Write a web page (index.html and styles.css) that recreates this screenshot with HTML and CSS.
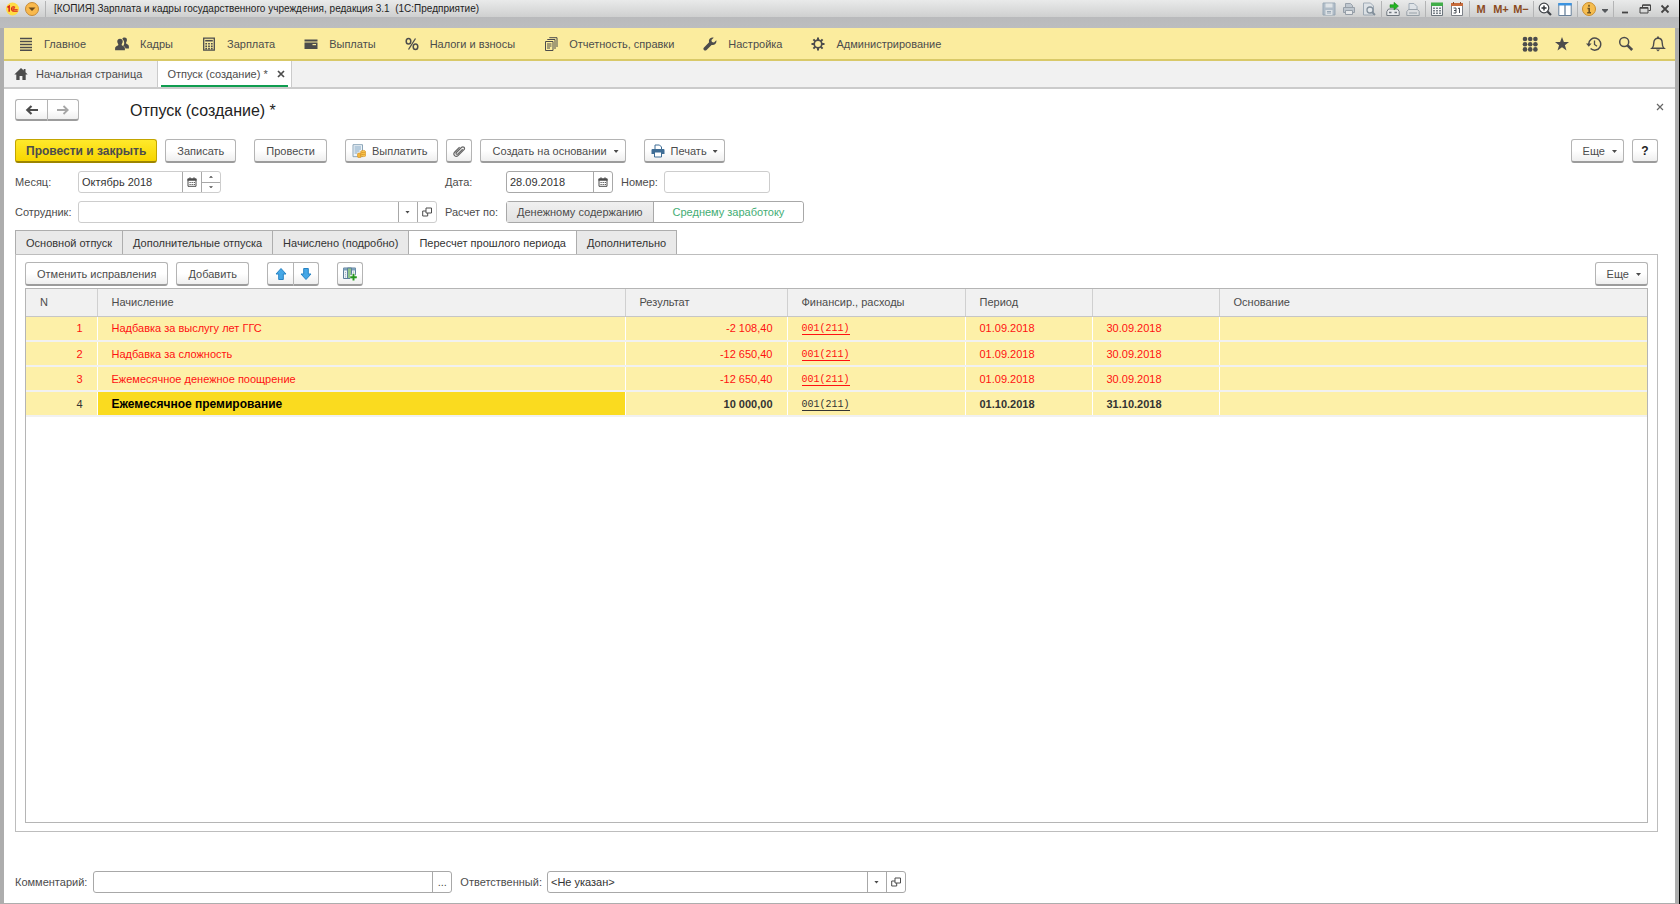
FILE: index.html
```html
<!DOCTYPE html>
<html lang="ru">

<head>
  <meta charset="UTF-8">
  <meta name="viewport" content="width=device-width, initial-scale=1.0">
  <title>Отпуск (создание) *</title>
  <link rel="stylesheet" href="styles.css">
</head>

<body>
  <div class="window">
    <!-- Заголовок окна -->
    <header class="titlebar">
      <svg class="logo" viewBox="0 0 14 14" aria-hidden="true">
        <circle cx="7" cy="7" r="7" fill="#ffdc45"/>
        <path d="M1.5 5.2 3.4 4v6" fill="none" stroke="#d8211c" stroke-width="1.6"/>
        <path d="M9.8 5.2a2.4 2.4 0 1 0-1.6 4.2h4.4M9.2 6.5a1 1 0 1 0-.6 1.4h4" fill="none" stroke="#d8211c" stroke-width="1.1"/>
      </svg>
      <button class="main-menu" aria-label="Главное меню">
        <svg viewBox="0 0 14 14"><circle cx="7" cy="7" r="6.5" fill="#f9b94c" stroke="#c58a35"/><path d="M3.5 5.5h7L7 9z" fill="#6b4a1c"/></svg>
      </button>
      <span class="tb-line"></span>
      <span class="window-title">[КОПИЯ] Зарплата и кадры государственного учреждения, редакция 3.1&nbsp; (1С:Предприятие)</span>
      <div class="tb-tools">
        <button class="tb-btn dim" aria-label="Сохранить"><svg viewBox="0 0 14 14"><path d="M1 1h12v12H1z" fill="#9fb0c0" stroke="#7f93a6"/><path d="M3.5 1.5h7v4h-7zM3.5 8h7v5h-7z" fill="#dfe5ea"/><path d="M5 9.5h4M5 11h4" stroke="#7f93a6"/></svg></button>
        <button class="tb-btn dim" aria-label="Печать"><svg viewBox="0 0 14 14"><path d="M3.5 5V1.5h5l2 2V5M1.5 5.5h11v5h-11z" fill="#b3bec9" stroke="#7b8794"/><path d="M3.5 8.5h7v4h-7z" fill="#eef0f2" stroke="#7b8794"/></svg></button>
        <button class="tb-btn dim" aria-label="Просмотр"><svg viewBox="0 0 14 14"><path d="M1.5 1h7l3 3v9h-10z" fill="#dde4ea" stroke="#8696a5"/><circle cx="8" cy="8" r="3" fill="#e8eef3" stroke="#607282" stroke-width="1.3"/><path d="m10 10 3 3" stroke="#607282" stroke-width="1.8"/></svg></button>
        <span class="tb-line"></span>
        <button class="tb-btn" aria-label="Получить ссылку"><svg viewBox="0 0 14 14"><path d="M.8 9.5 2.5 7h9l1.7 2.5v4H.8z" fill="#e8eaec" stroke="#707880"/><path d="M3 10.5h2.5M8.5 10.5H11" stroke="#707880" stroke-width="1.4"/><path d="M4 2.7h4V.3l4.500 3.800L8 8V5.500H4z" fill="#22b422" stroke="#128012" stroke-width=".5"/></svg></button>
        <button class="tb-btn dim" aria-label="Перейти по ссылке"><svg viewBox="0 0 14 14"><path d="M3 8V1.5h5l3 3V8" fill="#dfe5ea" stroke="#8595a4"/><path d="M.8 9.5 2.5 7.5h9l1.7 2v4H.8z" fill="#dde0e3" stroke="#7f8b96"/><path d="M3 11h8" stroke="#7f8b96"/></svg></button>
        <span class="tb-line"></span>
        <button class="tb-btn" aria-label="Калькулятор"><svg viewBox="0 0 14 14"><path d="M1.5 1.5h11v12h-11z" fill="#f4f5f6" stroke="#6c757d"/><path d="M1 .5h12v3.5H1z" fill="#41ad49"/><path d="M4 5.5v7M7 5.5v7M10 5.5v7" stroke="#5d6770" stroke-width="1.6" stroke-dasharray="1.4 1.1"/></svg></button>
        <button class="tb-btn" aria-label="Календарь"><svg viewBox="0 0 14 14"><path d="M1.5 1.5h11v12h-11z" fill="#fff" stroke="#7d8188"/><path d="M1 1h12v3H1z" fill="#c86b3b"/><path d="M3.5 0v2M10.5 0v2" stroke="#8a4a28"/><path d="M3.500 6h2.500v5h-2.500M4 8.500h2M8 6.500 9.500 6v5" fill="none" stroke="#474c55"/></svg></button>
        <span class="tb-line"></span>
        <button class="tb-btn mem">M</button>
        <button class="tb-btn mem">M+</button>
        <button class="tb-btn mem">M−</button>
        <span class="tb-line"></span>
        <button class="tb-btn" aria-label="Масштаб"><svg viewBox="0 0 14 14"><circle cx="6" cy="6" r="4.800" fill="#fff" stroke="#3f4348" stroke-width="1.200"/><path d="M3.500 6h5M6 3.500v5" stroke="#2d3136" stroke-width="1.400"/><path d="m9.500 9.500 3.500 3.500" stroke="#3f4348" stroke-width="2.200"/></svg></button>
        <button class="tb-btn" aria-label="Панели"><svg viewBox="0 0 14 14"><path d="M.8 1.500h12.400v12H.8z" fill="#fff" stroke="#68809a"/><path d="M.3 1h13.400v2.500H.3z" fill="#3b93e0"/><path d="M7 3v10" stroke="#68809a" stroke-width="1.300"/></svg></button>
        <span class="tb-line"></span>
        <button class="tb-btn" aria-label="О программе"><svg viewBox="0 0 14 14"><circle cx="7" cy="7" r="6.500" fill="#f5bd50" stroke="#c98d2d"/><path d="M7 2.800v2M5.500 6.500H7.200v4M5.200 10.700h3.800" fill="none" stroke="#6e5424" stroke-width="1.600"/></svg></button>
        <button class="tb-btn narrow" aria-label="Ещё"><svg class="small" viewBox="0 0 8 8"><path d="M1 4h6v1L4 8 1 5z" fill="#55585c"/></svg></button>
        <span class="tb-line"></span>
        <button class="tb-btn" aria-label="Свернуть"><svg viewBox="0 0 14 14"><path d="M4 10.500h6" stroke="#444" stroke-width="1.800"/></svg></button>
        <button class="tb-btn" aria-label="Восстановить"><svg viewBox="0 0 14 14"><path d="M4.500 5V3h8v5.500h-2M2 5.500h8v5.500H2z" fill="none" stroke="#444"/><path d="M2 6h8M4.500 3.200h8" stroke="#444" stroke-width="1.300"/></svg></button>
        <button class="tb-btn" aria-label="Закрыть"><svg viewBox="0 0 14 14"><path d="m3.500 3.500 7 7m0-7-7 7" stroke="#444" stroke-width="1.800"/></svg></button>
      </div>
    </header>

    <!-- Панель разделов -->
    <nav class="sections">
      <a href="#" class="section"><svg viewBox="0 0 14 14"><path d="M1 1.500h12M1 4.500h12M1 7.500h12M1 10.500h12M1 13.300h12" stroke="#4c4c4c" stroke-width="1.500"/></svg>Главное</a>
      <a href="#" class="section"><svg viewBox="0 0 14 14" fill="#4c4c4c"><path d="M9.500.5c1.800 0 2.700 1.300 2.400 3-.2 1.200-.9 1.700-.9 2.500 0 1 2.900 1.200 2.900 3.500V11.500H10.500c-.2-1.500-1.300-2.200-2.300-2.700 1-1.300 1.200-2.700.8-4.400C8.300 2.500 7.300 2 7.300 1.700 7.700 1 8.500.5 9.500.5z"/><path d="M5 1.800c2 0 3 1.400 2.700 3.300-.2 1.300-1 1.900-1 2.600 0 1.200 3.200 1.100 3.200 3.600v2H.1v-2c0-2.500 3.200-2.400 3.200-3.600 0-.7-.8-1.300-1-2.600C2 3.200 3 1.800 5 1.800z"/></svg>Кадры</a>
      <a href="#" class="section"><svg viewBox="0 0 14 14"><path d="M1.700 1.200h10.600v12H1.700z" fill="none" stroke="#4c4c4c" stroke-width="1.300"/><path d="M3.200 3.700h7.600" stroke="#4c4c4c" stroke-width="1.600"/><path d="M4.200 6v6.500M7 6v6.500M9.800 6v6.500" stroke="#4c4c4c" stroke-width="1.700" stroke-dasharray="1.600 .8"/></svg>Зарплата</a>
      <a href="#" class="section"><svg viewBox="0 0 14 14" fill="#4c4c4c"><path d="M.5 2.500h13v2H.5zM.5 5.500h13v6.500H.5z"/><path d="M8.500 7h3.500v1.200H8.500z" fill="#fbec9e"/></svg>Выплаты</a>
      <a href="#" class="section"><svg viewBox="0 0 14 14" fill="none" stroke="#4c4c4c"><ellipse cx="3.500" cy="4.300" rx="2.300" ry="2.800" stroke-width="1.500"/><ellipse cx="10.500" cy="9.700" rx="2.300" ry="2.800" stroke-width="1.500"/><path d="m10.500 1.500-7 11" stroke-width="1.300"/></svg>Налоги и взносы</a>
      <a href="#" class="section"><svg viewBox="0 0 14 14" fill="none" stroke="#4c4c4c"><path d="M1.500 4.500h7.500v9H1.500zM3.500 3V2.500h7.500V12M5.500 1V.7H13V10"/><path d="M3 7h4.500M3 9h4.500M3 11h3"/></svg>Отчетность, справки</a>
      <a href="#" class="section"><svg viewBox="0 0 14 14"><path d="M13.300 3.300 11 5.500 8.900 5l-.5-2L10.700.7C8.800 0 6.500 1 6 3.300c-.2.800 0 1.500.1 2L.8 10.700c-1.300 1.500.9 3.800 2.500 2.500l5.300-5.300c2.700.8 5.500-1.700 4.700-4.600z" fill="#4c4c4c"/></svg>Настройка</a>
      <a href="#" class="section"><svg viewBox="0 0 14 14" fill="none" stroke="#4c4c4c"><circle cx="7" cy="7" r="3.800" stroke-width="1.700"/><path d="M7 .5v2.500M7 11v2.500M.5 7H3M11 7h2.500M2.400 2.400l1.800 1.800M9.800 9.800l1.800 1.800M2.400 11.600l1.800-1.800M9.800 4.200l1.800-1.800" stroke-width="2"/></svg>Администрирование</a>
      <div class="section-tools">
        <button aria-label="Все функции"><svg viewBox="0 0 16 16" fill="#4c4c4c"><circle cx="3" cy="3" r="2.300"/><circle cx="8.200" cy="3" r="2.300"/><circle cx="13.400" cy="3" r="2.300"/><circle cx="3" cy="8.200" r="2.300"/><circle cx="8.200" cy="8.200" r="2.300"/><circle cx="13.400" cy="8.200" r="2.300"/><circle cx="3" cy="13.400" r="2.300"/><circle cx="8.200" cy="13.400" r="2.300"/><circle cx="13.400" cy="13.400" r="2.300"/></svg></button>
        <button aria-label="Избранное"><svg viewBox="0 0 16 16"><path d="m8 1 1.900 5h5.100l-4.100 3.200 1.600 5.300L8 11.300l-4.500 3.200 1.600-5.300L1 6h5.100z" fill="#4c4c4c"/></svg></button>
        <button aria-label="История"><svg viewBox="0 0 16 16" fill="none" stroke="#4c4c4c"><path d="M2.700 8a6 6 0 1 1 1.900 4.500" stroke-width="1.500"/><path d="M0 7.500h5.600L2.800 10.800z" fill="#4c4c4c" stroke="none"/><path d="M8.500 4.500V8.500l2.500 1.800" stroke-width="1.300"/></svg></button>
        <button aria-label="Поиск"><svg viewBox="0 0 16 16" fill="none" stroke="#4c4c4c"><circle cx="6.200" cy="6" r="4.500" stroke-width="1.500"/><path d="m9.500 9.300 4.700 4.700" stroke-width="2.600"/></svg></button>
        <button aria-label="Уведомления"><svg viewBox="0 0 16 16" fill="none" stroke="#4c4c4c"><path d="M2 12.300c1.800-1.500 1.800-3 1.800-5.500C3.800 4 5.500 2.300 8 2.300s4.200 1.700 4.200 4.500c0 2.500 0 4 1.800 5.500z" stroke-width="1.400"/><path d="M8 .5v2" stroke-width="1.800"/><path d="M6 13.500h4L8 15.500z" fill="#4c4c4c" stroke="none"/></svg></button>
      </div>
    </nav>

    <!-- Открытые окна -->
    <nav class="open-pages">
      <a href="#" class="page-link"><svg viewBox="0 0 14 14"><path d="M7 1 .3 7.500h2V13h3.300V9h2.800v4h3.300V7.500h2L11.500 5.300V2H9.700v1.600z" fill="#4c4c4c"/></svg>Начальная страница</a>
      <div class="page-link current">
        <span>Отпуск (создание) *</span>
        <button aria-label="Закрыть вкладку"><svg viewBox="0 0 8 8"><path d="m1 1 6 6m0-6L1 7" stroke="#4c4c4c" stroke-width="1.700"/></svg></button>
      </div>
    </nav>

    <main class="form">
      <div class="form-head">
        <div class="btn-pair">
          <button class="btn" aria-label="Назад"><svg viewBox="0 0 14 14"><path d="M13 7H3M6.500 3 2.300 7l4.200 4" fill="none" stroke="#4c4c4c" stroke-width="2.200"/></svg></button>
          <button class="btn" aria-label="Вперед"><svg viewBox="0 0 14 14"><path d="M1 7h10M7.500 3l4.200 4-4.200 4" fill="none" stroke="#a6a6a6" stroke-width="1.800"/></svg></button>
        </div>
        <h1>Отпуск (создание) *</h1>
        <button class="close-form" aria-label="Закрыть"><svg viewBox="0 0 8 8"><path d="m1 1 6 6m0-6L1 7" stroke="#666" stroke-width="1.200"/></svg></button>
      </div>

      <div class="commands">
        <button class="btn primary">Провести и закрыть</button>
        <button class="btn">Записать</button>
        <button class="btn apart">Провести</button>
        <button class="btn apart with-icon"><svg viewBox="0 0 14 14"><path d="M1 .7h9.500v12H1z" fill="#eef4f8" stroke="#8aa4b8"/><path d="M2.500 3h6.500M2.500 5h6.500M2.500 7h5M2.500 9h3" stroke="#7fa3c2"/><path d="M5.500 10c0-1.400 3.500-1.400 3.500 0v3.200c-1 .6-3.500.5-3.500-.5z" fill="#f3b63c" stroke="#d58e21" stroke-width=".6"/><path d="M8.700 7.500c0-1.500 5-1.500 5 0V12c-1 .9-4 .7-5 0z" fill="#f7c44f" stroke="#d58e21" stroke-width=".6"/><path d="M9 8c1 .8 3.500.8 4.500 0M9 10c1 .8 3.500.8 4.500 0" fill="none" stroke="#d58e21" stroke-width=".7"/></svg>Выплатить</button>
        <button class="btn icon" aria-label="Присоединенные файлы"><svg viewBox="0 0 14 14"><path d="M10.700 5.200 6 9.900c-1.200 1.200-2.700-.2-1.600-1.400l5-5c1.900-1.800 4.200.4 2.400 2.400l-5.500 5.500c-2.700 2.500-6-.7-3.500-3.400L7.600 3.200" fill="none" stroke="#666" stroke-width="1.200"/></svg></button>
        <button class="btn more">Создать на основании<i class="caret"></i></button>
        <button class="btn more apart with-icon"><svg viewBox="0 0 14 14"><path d="M4 5V1h4.500L10.500 3v2" fill="#fff" stroke="#3f6d95"/><path d="M1.500 5h11a1 1 0 0 1 1 1v4h-13V6a1 1 0 0 1 1-1z" fill="#3f6d95"/><path d="M3.500 8h7v5h-7z" fill="#fff" stroke="#3f6d95"/></svg>Печать<i class="caret"></i></button>
        <button class="btn more to-right">Еще<i class="caret"></i></button>
        <button class="btn icon help">?</button>
      </div>

      <div class="fields">
        <label for="month">Месяц:</label>
        <div class="first">
          <div class="field month">
            <input id="month" type="text" value="Октябрь 2018">
            <button aria-label="Выбрать месяц"><svg class="cal" viewBox="0 0 10 10"><path d="M1 2h8v7.300H1z" fill="none" stroke="#4c4c4c"/><path d="M.5 1.500h9v2.200h-9zM2.500.3h1v2h-1zM6.500.3h1v2h-1z" fill="#4c4c4c"/><path d="M2.500 5.500h5.500M2.500 7.500h5.500" stroke="#4c4c4c" stroke-dasharray="1.200 .9"/></svg></button>
            <div class="spin">
              <button aria-label="Больше"><i class="up"></i></button>
              <button aria-label="Меньше"><i class="down"></i></button>
            </div>
          </div>
        </div>
        <label for="date">Дата:</label>
        <div class="line">
          <div class="field date">
            <input id="date" type="text" value="28.09.2018">
            <button aria-label="Выбрать дату"><svg class="cal" viewBox="0 0 10 10"><path d="M1 2h8v7.300H1z" fill="none" stroke="#4c4c4c"/><path d="M.5 1.500h9v2.200h-9zM2.500.3h1v2h-1zM6.500.3h1v2h-1z" fill="#4c4c4c"/><path d="M2.500 5.500h5.500M2.500 7.500h5.500" stroke="#4c4c4c" stroke-dasharray="1.200 .9"/></svg></button>
          </div>
          <label for="number" class="number-label">Номер:</label>
          <div class="field number"><input id="number" type="text"></div>
        </div>

        <label for="employee">Сотрудник:</label>
        <div class="first">
          <div class="field employee">
            <div class="select">
              <select id="employee"><option></option></select>
              <i class="caret"></i>
            </div>
            <button aria-label="Открыть"><svg class="cal" viewBox="0 0 10 10"><path d="M4 1h5.500v5H4zM4 4H.7v5h5V6" fill="none" stroke="#4c4c4c"/></svg></button>
          </div>
        </div>
        <span>Расчет по:</span>
        <div class="line">
          <div class="switch">
            <label><input type="radio" name="calc">Денежному содержанию</label>
            <label><input type="radio" name="calc" checked>Среднему заработоку</label>
          </div>
        </div>
      </div>

      <div class="tabs">
        <button class="tab">Основной отпуск</button>
        <button class="tab">Дополнительные отпуска</button>
        <button class="tab">Начислено (подробно)</button>
        <button class="tab active">Пересчет прошлого периода</button>
        <button class="tab">Дополнительно</button>
      </div>

      <section class="panel">
        <div class="commands">
          <button class="btn">Отменить исправления</button>
          <button class="btn">Добавить</button>
          <div class="btn-pair apart">
            <button class="btn" aria-label="Вверх"><svg viewBox="0 0 14 14"><path d="M7 1.500 12 7H9.300v5.500H4.700V7H2z" fill="#45a7e6" stroke="#2683c4"/></svg></button>
            <button class="btn" aria-label="Вниз"><svg viewBox="0 0 14 14"><path d="M7 12.500 12 7H9.300V1.500H4.700V7H2z" fill="#45a7e6" stroke="#2683c4"/></svg></button>
          </div>
          <button class="btn icon apart" aria-label="Настройка колонок"><svg viewBox="0 0 14 14"><path d="M.5 1h12v10.500H.5z" fill="#eef2f5" stroke="#5d7f9b"/><path d="M.5 1h12v2.500H.5z" fill="#7da0bb"/><path d="M4.500 1h4v10.500h-4z" fill="#8fc58b" stroke="#5d7f9b"/><path d="M2.500 5v5.500M10.500 4.500v3" stroke="#9db4c6" stroke-dasharray="1.200 1"/><path d="M10.500 6.500v7M7 10h7" stroke="#fff" stroke-width="3.400"/><path d="M10.500 6.800v6.800M7.200 10.200h6.600" stroke="#27961f" stroke-width="2"/></svg></button>
          <button class="btn more to-right">Еще<i class="caret"></i></button>
        </div>

        <div class="table-box">
          <table>
            <colgroup>
              <col class="c-n"><col class="c-name"><col class="c-sum"><col class="c-fin"><col class="c-date"><col class="c-date"><col>
            </colgroup>
            <thead>
              <tr><th>N</th><th>Начисление</th><th>Результат</th><th>Финансир., расходы</th><th>Период</th><th></th><th>Основание</th></tr>
            </thead>
            <tbody>
              <tr class="storno"><td class="num">1</td><td>Надбавка за выслугу лет ГГС</td><td class="num">-2 108,40</td><td><a href="#">001(211)</a></td><td>01.09.2018</td><td>30.09.2018</td><td></td></tr>
              <tr class="storno"><td class="num">2</td><td>Надбавка за сложность</td><td class="num">-12 650,40</td><td><a href="#">001(211)</a></td><td>01.09.2018</td><td>30.09.2018</td><td></td></tr>
              <tr class="storno"><td class="num">3</td><td>Ежемесячное денежное поощрение</td><td class="num">-12 650,40</td><td><a href="#">001(211)</a></td><td>01.09.2018</td><td>30.09.2018</td><td></td></tr>
              <tr class="manual"><td class="num">4</td><td class="cursor">Ежемесячное премирование</td><td class="num">10 000,00</td><td><a href="#">001(211)</a></td><td>01.10.2018</td><td>31.10.2018</td><td></td></tr>
            </tbody>
          </table>
        </div>
      </section>

      <footer class="form-foot">
        <label for="comment">Комментарий:</label>
        <div class="field strong comment">
          <input id="comment" type="text">
          <button aria-label="Выбрать комментарий">...</button>
        </div>
        <label for="responsible" class="resp-label">Ответственный:</label>
        <div class="field strong responsible">
          <div class="select">
            <select id="responsible"><option>&lt;Не указан&gt;</option></select>
            <i class="caret"></i>
          </div>
          <button aria-label="Открыть"><svg class="cal" viewBox="0 0 10 10"><path d="M4 1h5.500v5H4zM4 4H.7v5h5V6" fill="none" stroke="#4c4c4c"/></svg></button>
        </div>
      </footer>
    </main>
  </div>
</body>

</html>
```

FILE: styles.css
```css
* {
  box-sizing: border-box;
}

body {
  margin: 0;
  background-color: #000;
  color: #4c4c4c;
  font-family: "Liberation Sans", Arial, sans-serif;
  font-size: 11px;
  line-height: 16px;
}

button,
input,
select {
  margin: 0;
  padding: 0;
  border: none;
  background: none;
  color: inherit;
  font: inherit;
}

a {
  color: inherit;
  text-decoration: none;
}

svg {
  display: block;
  flex: none;
  width: 14px;
  height: 14px;
}

.window {
  display: flex;
  flex-direction: column;
  min-height: 100vh;
  margin-right: 1px;
  padding: 0 4px 1px;
  background-color: #adadad;
}

/* заголовок */
.titlebar {
  display: flex;
  align-items: flex-start;
  height: 28px;
  margin: 0 -4px;
  padding: 1px 4px 0 6px;
  background: linear-gradient(#e9eaea, #cfd0d0 17px, #b9babc 17px, #bcbdbf);
}

.logo {
  width: 13px;
  height: 16px;
}

.main-menu {
  margin-left: 6px;
  padding-top: 1px;
}

.titlebar > .tb-line {
  margin-left: 6px;
}

.tb-line {
  width: 1px;
  height: 16px;
  margin: 0 1px 0 2px;
  background-color: #b3b4b5;
}

.window-title {
  margin-left: 7px;
  color: #222;
  font-size: 10px;
  white-space: nowrap;
}

.tb-tools {
  display: flex;
  margin-left: auto;
}

.tb-btn {
  display: flex;
  align-items: center;
  justify-content: center;
  width: 20px;
  height: 16px;
}

.tb-btn.narrow {
  width: 12px;
}

.tb-btn.dim svg {
  opacity: 0.7;
}

.tb-btn.mem {
  color: #8a4b22;
  font-weight: bold;
}

svg.small {
  width: 8px;
  height: 8px;
}

/* разделы */
.sections {
  display: flex;
  align-items: center;
  gap: 29px;
  height: 33px;
  padding-left: 15px;
  border-bottom: 2px solid #d9c968;
  background-color: #fbec9e;
}

.section {
  display: flex;
  align-items: center;
  gap: 11px;
  white-space: nowrap;
}

.section-tools {
  display: flex;
  margin-right: 1px;
  margin-left: auto;
}

.section-tools button {
  display: flex;
  justify-content: center;
  width: 32px;
}

.section-tools svg {
  width: 16px;
  height: 16px;
}

/* вкладки окон */
.open-pages {
  display: flex;
  height: 28px;
  border-bottom: 2px solid #cbcbcb;
  background-color: #f1f1f1;
}

.page-link {
  display: flex;
  align-items: center;
  gap: 8px;
  padding: 0 15px 0 10px;
}

.page-link.current {
  gap: 9px;
  padding: 0 6px 0 9px;
  border: solid #cbcbcb;
  border-width: 0 1px;
  background: linear-gradient(#0f9d50, #0f9d50) center bottom / calc(100% - 6px) 2px no-repeat #fff;
}

.page-link.current svg {
  width: 8px;
  height: 8px;
}

/* форма */
.form {
  display: flex;
  flex: 1;
  flex-direction: column;
  padding: 10px 17px 10px 11px;
  background-color: #fff;
}

.form-head {
  display: flex;
  align-items: center;
  height: 22px;
}

.form-head .btn {
  height: 22px;
}

h1 {
  margin: 2px 0 0 51px;
  color: #222;
  font-size: 16px;
  font-weight: normal;
  line-height: 20px;
}

.close-form {
  align-self: flex-start;
  margin-right: -6px;
  margin-left: auto;
  padding: 4px 0 4px 4px;
}

.close-form svg {
  width: 8px;
  height: 8px;
}

.commands {
  display: flex;
  gap: 8px;
}

.form-head + .commands {
  margin: 18px 0 8px;
}

.btn {
  display: flex;
  align-items: center;
  justify-content: center;
  height: 24px;
  padding: 0 11px;
  border: 1px solid #b4b4b4;
  border-bottom: 2px solid #9c9c9c;
  border-radius: 3px;
  background: linear-gradient(#fff 50%, #efefef);
  white-space: nowrap;
}

.btn.primary {
  padding: 0 10px;
  border-color: #c3a500;
  border-bottom-color: #9d8500;
  background: linear-gradient(#ffe92b, #f7d500);
  font-size: 12px;
  font-weight: bold;
}

.btn.icon {
  width: 26px;
  padding: 0;
}

.btn.with-icon {
  gap: 6px;
  padding: 0 10px 0 6px;
}

.btn.more {
  padding-right: 6px;
}

.btn.help {
  color: #222;
  font-size: 12px;
  font-weight: bold;
}

.apart {
  margin-left: 10px;
}

.to-right {
  margin-left: auto;
}

.caret {
  width: 5px;
  height: 3px;
  margin-top: 2px;
  margin-left: 7px;
  background-color: #4c4c4c;
  clip-path: polygon(0 0, 100% 0, 50% 100%);
}

.with-icon .caret {
  margin-left: 0;
}

.btn-pair {
  display: flex;
}

.btn-pair .btn {
  width: 26px;
  padding: 0;
}

.form-head .btn-pair .btn {
  width: 32px;
}

.btn-pair .btn:first-child {
  border-right: none;
  border-radius: 3px 0 0 3px;
}

.btn-pair .btn:last-child {
  border-radius: 0 3px 3px 0;
}

/* реквизиты */
.fields {
  display: grid;
  grid-template-columns: 63px 367px 61px 1fr;
  grid-auto-rows: 22px;
  row-gap: 8px;
  align-items: center;
  margin-bottom: 7px;
}

.line {
  display: flex;
  align-items: center;
}

.field {
  display: flex;
  height: 22px;
  border: 1px solid #cdcdcd;
  border-radius: 3px;
  background-color: #fff;
}

.field.strong,
.field.date {
  border-color: #a8a8a8;
}

.field input {
  flex: 1;
  min-width: 0;
  padding: 0 3px;
  color: #333;
}

.field > button,
.spin {
  display: flex;
  flex: none;
  align-items: center;
  justify-content: center;
  width: 19px;
  border-left: 1px solid #a8a8a8;
}

svg.cal {
  width: 10px;
  height: 10px;
}

.month {
  width: 143px;
}

.spin {
  flex-direction: column;
}

.spin button {
  display: flex;
  flex: 1;
  align-items: center;
  justify-content: center;
  width: 100%;
}

.spin button:first-child {
  border-bottom: 1px solid #a8a8a8;
}

.up,
.down {
  width: 4px;
  height: 2px;
  background-color: #4c4c4c;
  clip-path: polygon(50% 0, 100% 100%, 0 100%);
}

.down {
  clip-path: polygon(0 0, 100% 0, 50% 100%);
}

.date {
  width: 107px;
}

.number-label {
  margin: 0 6px 0 8px;
}

.number {
  width: 106px;
}

.employee {
  width: 359px;
}

.select {
  display: grid;
  flex: 1;
  grid-template-columns: 1fr 19px;
  align-items: center;
}

.select select {
  grid-area: 1 / 1 / 2 / 3;
  height: 20px;
  padding: 0 3px;
  color: #333;
  background: linear-gradient(#a8a8a8, #a8a8a8) right 18px top / 1px 100% no-repeat;
  appearance: none;
}

.select .caret {
  grid-area: 1 / 2 / 2 / 3;
  justify-self: center;
  margin: 0;
  pointer-events: none;
}

.switch {
  display: flex;
  height: 22px;
  border: 1px solid #a8a8a8;
  border-radius: 3px;
}

.switch label {
  display: flex;
  align-items: center;
  padding: 0 10px;
  border-right: 1px solid #a8a8a8;
  background: linear-gradient(#f0f0f0, #e2e2e2);
}

.switch label:last-child {
  padding: 0 19px;
  border: none;
  border-radius: 3px;
  background: #fff;
  color: #43ad74;
}

.switch input {
  width: 0;
  appearance: none;
}

/* страницы формы */
.tabs {
  display: flex;
}

.tab {
  height: 25px;
  margin-bottom: -1px;
  padding: 0 10px;
  border: solid #adadad;
  border-width: 1px 1px 1px 0;
  background-color: #e9e9e9;
  color: #333;
}

.tab:first-child {
  border-left-width: 1px;
}

.tab.active {
  border-bottom-color: #fff;
  background-color: #fff;
}

.panel {
  display: flex;
  flex: 1;
  flex-direction: column;
  padding: 7px 9px 8px;
  border: 1px solid #bdbdbd;
}

.table-box {
  flex: 1;
  margin-top: 2px;
  border: 1px solid #b5b5b5;
}

table {
  width: 100%;
  border-collapse: collapse;
  table-layout: fixed;
}

.c-n {
  width: 71px;
}

.c-name {
  width: 528px;
}

.c-sum {
  width: 162px;
}

.c-fin {
  width: 178px;
}

.c-date {
  width: 127px;
}

th {
  height: 27px;
  padding: 0 14px;
  border-right: 1px solid #d0d0d0;
  border-bottom: 1px solid #c6c6c6;
  background-color: #f1f1f1;
  font-weight: normal;
  text-align: left;
}

td {
  height: 25px;
  padding: 0 14px;
  border-right: 1px solid #fff;
  border-bottom: 2px solid #f1f1f1;
  background-color: #fdf0a8;
}

th:last-child,
td:last-child {
  border-right: none;
}

.num {
  text-align: right;
}

.storno {
  color: #f11;
}

td a {
  border-bottom: 1px solid;
  font-family: "Liberation Mono", "Courier New", monospace;
  font-size: 10px;
}

.manual td {
  color: #333;
  font-weight: bold;
}

.manual td:first-child,
.manual a {
  font-weight: normal;
}

.manual .cursor {
  background-color: #fadb1f;
  color: #000;
  font-size: 12px;
}

/* подвал */
.form-foot {
  display: flex;
  align-items: center;
  margin-top: 39px;
}

.comment {
  width: 359px;
  margin-left: 6px;
}

.resp-label {
  margin: 0 5px 0 8px;
}

.responsible {
  width: 359px;
}
```
